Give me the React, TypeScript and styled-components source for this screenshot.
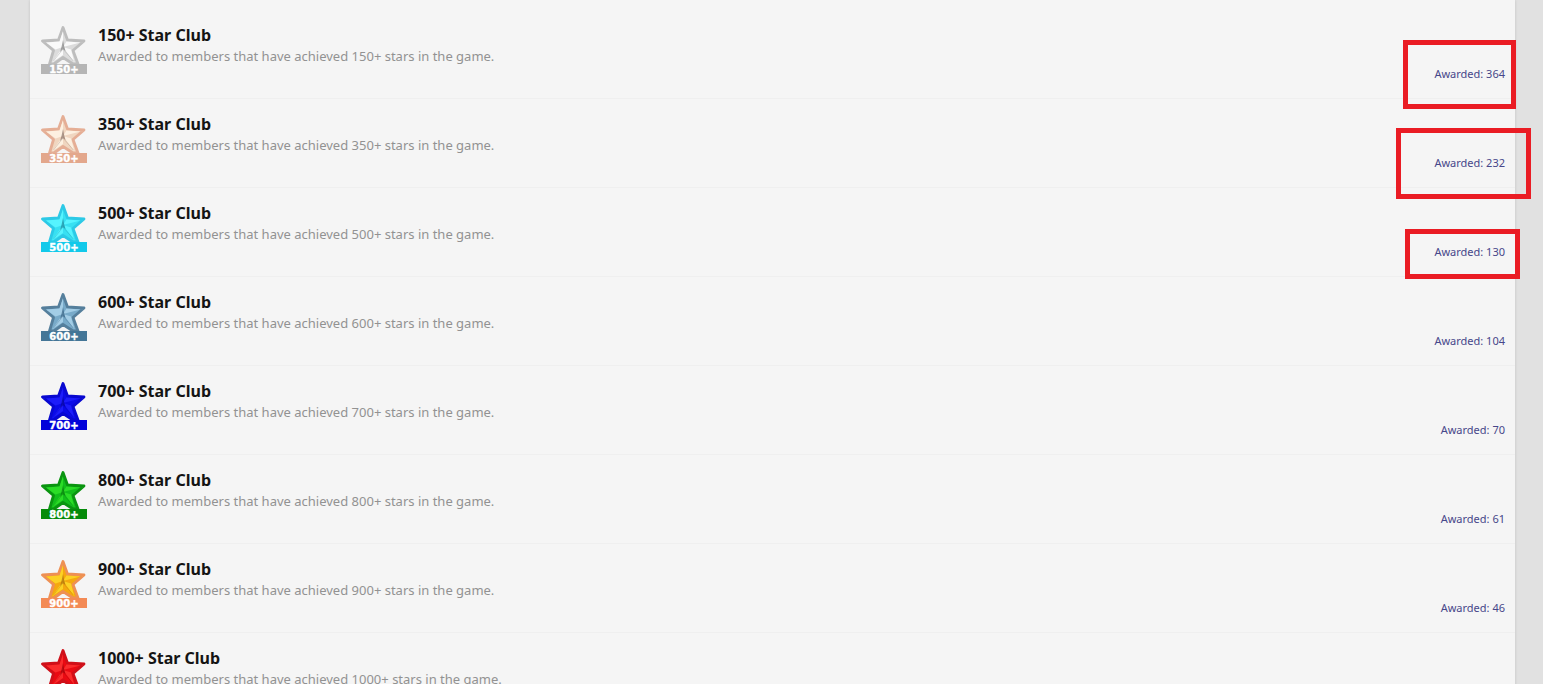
import React from "react";
import styled, { createGlobalStyle } from "styled-components";

const GlobalStyle = createGlobalStyle`
  * { box-sizing: border-box; }
  html, body { margin: 0; height: 100%; background: #e1e1e1; }
  body { overflow: hidden; font-family: "Noto Sans", "Open Sans", sans-serif; }
`;

const Page = styled.main`
  padding: 0 28px 0 30px;
`;

const Panel = styled.ul`
  margin: 0;
  padding: 10px 0 0;
  list-style: none;
  background: #f5f5f5;
  box-shadow: 0 0 3px rgba(0, 0, 0, 0.14);
`;

const Row = styled.li`
  position: relative;
  display: flex;
  align-items: flex-start;
  gap: 11px;
  padding: 16px 10px 24px 11px;
  border-bottom: 1px solid #efefef;
`;

const Badge = styled.svg`
  flex: none;
  display: block;
  width: 46px;
  height: 48px;
`;

const BadgeText = styled.text<{ $small: boolean }>`
  font: bold ${(p) => (p.$small ? 9 : 10)}px "DejaVu Sans", sans-serif;
  fill: #fff;
  stroke: #fff;
  stroke-width: 0.4px;
`;

const Info = styled.div`
  flex: 1;
  min-width: 0;
`;

const Title = styled.h3`
  margin: 0;
  font-size: 16px;
  line-height: 18px;
  font-weight: 700;
  color: #141414;
`;

const Description = styled.p`
  margin: 0;
  padding-top: 2px;
  font-size: 13px;
  line-height: 20px;
  color: #929292;
`;

const AwardLink = styled.a`
  align-self: flex-end;
  margin-bottom: -9px;
  font-size: 11px;
  line-height: 18px;
  color: #47478a;
  text-decoration: none;
  white-space: nowrap;
`;

const Highlight = styled.span<{ $top: number; $right: number; $width: number; $height: number }>`
  position: absolute;
  z-index: 1;
  top: ${(p) => p.$top}px;
  right: ${(p) => p.$right}px;
  width: ${(p) => p.$width}px;
  height: ${(p) => p.$height}px;
  border: 5px solid #ea1c24;
  pointer-events: none;
`;

type Tone = { edge: string; light: string; mid: string; dark: string; bar: string };
type Mark = { top: number; right: number; width: number; height: number };
type Award = { stars: number; count: number; tone: Tone; mark?: Mark };

const awards: Award[] = [
  { stars: 150, count: 364, tone: { edge: "#bdbdbd", light: "#fafafa", mid: "#dcdcdc", dark: "#777777", bar: "#b5b5b5" }, mark: { top: 30, right: -1, width: 113, height: 69 } },
  { stars: 350, count: 232, tone: { edge: "#e5ae95", light: "#fdf0e0", mid: "#f0d6c0", dark: "#80675c", bar: "#e3a78c" }, mark: { top: 29, right: -16, width: 135, height: 71 } },
  { stars: 500, count: 130, tone: { edge: "#2cc9e6", light: "#56f4ff", mid: "#38e0f2", dark: "#187f93", bar: "#12c9ea" }, mark: { top: 41, right: -5, width: 115, height: 50 } },
  { stars: 600, count: 104, tone: { edge: "#557f9c", light: "#a3cde6", mid: "#78aac9", dark: "#2d5879", bar: "#447697" } },
  { stars: 700, count: 70, tone: { edge: "#0808d0", light: "#1c1cfa", mid: "#0a0ae8", dark: "#050592", bar: "#0202da" } },
  { stars: 800, count: 61, tone: { edge: "#0a9410", light: "#2bdc26", mid: "#12bd1b", dark: "#04730a", bar: "#058b0a" } },
  { stars: 900, count: 46, tone: { edge: "#ee9054", light: "#fcd024", mid: "#f5a80f", dark: "#a4660a", bar: "#f38a55" } },
  { stars: 1000, count: 38, tone: { edge: "#cf1019", light: "#fa2c2c", mid: "#ea0a12", dark: "#970008", bar: "#d50b14" } },
];

function StarBadge({ stars, tone }: { stars: number; tone: Tone }) {
  return (
    <Badge viewBox="0 0 46 48" role="img" aria-label={`${stars}+ stars`}>
      <path d="M22 1.5 26.5 14 43 15 32 24.5 37 38H32L22 31.5 13 38H8.5L12.5 24.5 1.5 15 17.5 14Z" fill={tone.mid} stroke={tone.edge} strokeWidth="2.8" strokeLinejoin="round" />
      <path d="M22 5 18.5 15.5 22 21Z M5 16.5 14.5 23.5 22 21 18.5 15.5Z M11 36.5 22 29V21Z M33.5 36.5 30 23.5 22 21Z M39.5 16.5 25.5 15.5 22 21Z" fill={tone.light} />
      <path d="M22 14 23 19.5 24.5 25 22 23 19 26 20.5 21Z" fill={tone.dark} opacity=".65" />
      <path d="M22 23 12.5 35M22 23 32.5 35" stroke={tone.dark} strokeWidth="1" opacity=".25" />
      <rect y="38" width="46" height="10" fill={tone.bar} />
      <BadgeText x="23" y="47" textAnchor="middle" $small={stars >= 1000}>{stars}+</BadgeText>
    </Badge>
  );
}

export default function App() {
  return (
    <>
      <GlobalStyle />
      <Page>
        <Panel>
          {awards.map(({ stars, count, tone, mark }) => (
            <Row key={stars}>
              <StarBadge stars={stars} tone={tone} />
              <Info>
                <Title>{stars}+ Star Club</Title>
                <Description>Awarded to members that have achieved {stars}+ stars in the game.</Description>
              </Info>
              <AwardLink href="#">Awarded: {count}</AwardLink>
              {mark && <Highlight $top={mark.top} $right={mark.right} $width={mark.width} $height={mark.height} />}
            </Row>
          ))}
        </Panel>
      </Page>
    </>
  );
}
